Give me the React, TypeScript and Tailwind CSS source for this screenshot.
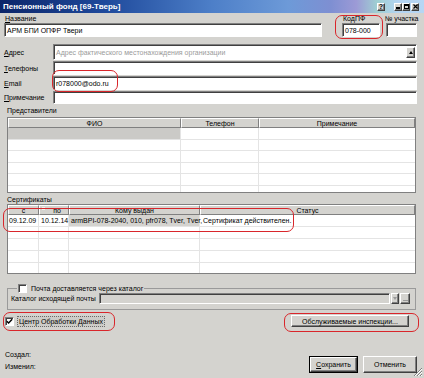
import type { ReactNode } from "react";

const raised =
  "border border-t-white border-l-white border-r-[#404040] border-b-[#404040] shadow-[inset_-1px_-1px_0_#808080] bg-[#d4d3cf]";
const sunken =
  "border border-t-[#808080] border-l-[#808080] border-r-white border-b-white shadow-[inset_1px_1px_0_#404040]";
const headCell =
  "flex h-full items-center justify-center border-r border-b border-t border-l border-t-white border-l-white border-r-[#808080] border-b-[#808080] bg-[#d4d3cf]";

function Input({ className = "", children }: { className?: string; children?: ReactNode }) {
  return (
    <div className={`flex items-center overflow-hidden whitespace-nowrap bg-white pl-[2px] ${sunken} ${className}`}>
      {children}
    </div>
  );
}

function FieldRow({ label, h, children }: { label: ReactNode; h: string; children?: ReactNode }) {
  return (
    <div className="flex items-center">
      <div className="w-[53px] pl-[4px]">{label}</div>
      <Input className={`flex-1 ${h}`}>{children}</Input>
    </div>
  );
}

function TitleButton({ children }: { children: ReactNode }) {
  return <div className={`flex h-[8px] w-[8px] items-center justify-center ${raised}`}>{children}</div>;
}

function Check({ checked = false }: { checked?: boolean }) {
  return (
    <div className={`flex h-[9px] w-[9px] items-center justify-center bg-white ${sunken}`}>
      {checked && (
        <svg width="7" height="7" viewBox="0 0 7 7">
          <path d="M0.8 3.2 L2.6 5 L6.2 1.2" stroke="#000" strokeWidth="1.4" fill="none" />
        </svg>
      )}
    </div>
  );
}

function Mark({ className }: { className: string }) {
  return <div className={`pointer-events-none absolute rounded-[7px] border-[1.5px] border-[#d9262b] ${className}`} />;
}

const repCols = ["w-[173px]", "w-[78px]", "flex-1"];

export default function App() {
  return (
    <div className="relative flex h-[378px] w-[424px] flex-col overflow-hidden bg-[#d4d3cf] font-['Liberation_Sans',Arial,sans-serif] text-[7px] leading-none text-black">
      {/* title bar */}
      <div className="flex h-[13px] items-center bg-[linear-gradient(90deg,#0b2569_0%,#1f4a9c_25%,#4d7fc8_50%,#6d9ad8_68%,#7e8fd2_78%,#9c9ad6_84%,#9fd0d2_89%,#b4d4f2_94%,#b6d6f4_100%)] pl-[3px] pr-[5px]">
        <span className="text-[8px] font-bold text-white">Пенсионный фонд [69-Тверь]</span>
        <div className="ml-auto flex items-center">
          <TitleButton>
            <span className="text-[7px] font-bold leading-none">?</span>
          </TitleButton>
          <div className="ml-[9px] flex">
            <TitleButton>
              <div className="mt-[3px] h-[1.5px] w-[4px] bg-black" />
            </TitleButton>
            <TitleButton>
              <div className="h-[5px] w-[5px] border border-t-2 border-black" />
            </TitleButton>
            <div className="ml-[1px]">
              <TitleButton>
                <svg width="5" height="5" viewBox="0 0 5 5">
                  <path d="M0.5 0.5 L4.5 4.5 M4.5 0.5 L0.5 4.5" stroke="#000" strokeWidth="1.2" />
                </svg>
              </TitleButton>
            </div>
          </div>
        </div>
      </div>

      {/* name / code / district */}
      <div className="mt-[1px] flex px-[4px]">
        <div className="w-[318px]">
          <div className="h-[9px] pl-[1px] leading-[9px]">
            <u>Н</u>азвание
          </div>
          <Input className="h-[14px]">АРМ БПИ ОПФР Твери</Input>
        </div>
        <div className="ml-[20px] w-[38px]">
          <div className="h-[9px] pl-[1px] leading-[9px]">КодПФ</div>
          <Input className="h-[14px]">078-000</Input>
        </div>
        <div className="ml-[6px] w-[31px]">
          <div className="-ml-[1px] h-[9px] whitespace-nowrap tracking-[-0.1px] leading-[9px]">№ участка</div>
          <Input className="h-[14px]" />
        </div>
      </div>

      {/* contact fields */}
      <div className="mt-[7px] flex flex-col gap-[1px] pr-[7px]">
        <FieldRow
          h="h-[16px]"
          label={
            <>
              <u>А</u>дрес
            </>
          }
        >
          <span className="flex-1 text-[#9a9a9a]">Адрес фактического местонахождения организации</span>
          <div className={`mr-[1px] flex h-[11px] w-[9px] items-center justify-center ${raised}`}>
            <div className="h-0 w-0 border-x-[2.5px] border-b-[3px] border-x-transparent border-b-black" />
          </div>
        </FieldRow>
        <FieldRow
          h="h-[14px]"
          label={
            <>
              <u>Т</u>елефоны
            </>
          }
        />
        <FieldRow
          h="h-[14px]"
          label={
            <>
              <u>E</u>mail
            </>
          }
        >
          r078000@odo.ru
        </FieldRow>
        <FieldRow
          h="h-[13px]"
          label={
            <>
              <u>П</u>римечание
            </>
          }
        />
      </div>

      {/* representatives */}
      <div className="mt-[2px] h-[10px] pl-[7px] leading-[10px]">Представители</div>
      <div className="ml-[7px] mt-[1px] flex h-[76px] w-[409px] flex-col overflow-hidden border border-[#808080] bg-white">
        <div className="flex h-[10px] shrink-0">
          <div className={`${headCell} ${repCols[0]}`}>ФИО</div>
          <div className={`${headCell} ${repCols[1]}`}>Телефон</div>
          <div className={`${headCell} ${repCols[2]}`}>Примечание</div>
        </div>
        {[0, 1, 2, 3, 4, 5].map((r) => (
          <div key={r} className="flex h-[11.5px] shrink-0 border-b border-[#e4e4e4]">
            <div className={`${repCols[0]} border-r border-[#e4e4e4] ${r === 0 ? "bg-[#cbcac7]" : ""}`} />
            <div className={`${repCols[1]} border-r border-[#e4e4e4]`} />
            <div className={repCols[2]} />
          </div>
        ))}
      </div>

      {/* certificates */}
      <div className="mt-[2px] h-[9px] pl-[7px] leading-[9px]">Сертификаты</div>
      <div className="ml-[7px] flex h-[70px] w-[409px] flex-col overflow-hidden border border-[#808080] bg-white">
        <div className="flex h-[10px] shrink-0">
          <div className={`${headCell} w-[31px]`}>с</div>
          <div className={`${headCell} relative w-[30px]`}>
            <div className="absolute left-[2px] top-[1px] h-[3px] w-[3px] bg-[#f0f0f0]" />
            <span className="ml-[6px]">по</span>
          </div>
          <div className={`${headCell} w-[131px]`}>Кому выдан</div>
          <div className={`${headCell} flex-1`}>Статус</div>
        </div>
        {[0, 1, 2, 3, 4].map((r) => (
          <div key={r} className="flex h-[12px] shrink-0 border-b border-[#e4e4e4]">
            <div className="flex w-[31px] items-center border-r border-[#e4e4e4] pl-[1px]">{r === 0 && "09.12.09"}</div>
            <div className="flex w-[30px] items-center border-r border-[#e4e4e4] pl-[2px]">{r === 0 && "10.12.14"}</div>
            <div
              className={`flex w-[131px] items-center whitespace-nowrap border-r border-[#e4e4e4] pl-[2px] ${r === 0 ? "bg-[#d4d3cf]" : ""}`}
            >
              {r === 0 && "armBPI-078-2040, 010, pfr078, Tver, Tver,"}
            </div>
            <div className="flex flex-1 items-center pl-[3px]">{r === 0 && "Сертификат действителен."}</div>
          </div>
        ))}
      </div>

      {/* mail catalog group */}
      <fieldset className="ml-[7px] mt-[9px] w-[409px] border border-[#9a9a9a] pb-[5px]">
        <legend className="ml-[9px] flex h-[10px] items-center gap-[4px] px-[1px]">
          <Check />
          <span>Почта доставляется через каталог</span>
        </legend>
        <div className="flex h-[11px] items-center pl-[3px]">
          <span className="w-[88px] whitespace-nowrap">Каталог исходящей почты</span>
          <div className={`h-full w-[291px] bg-[#d4d3cf] ${sunken}`} />
          <div className={`ml-[1px] flex h-full w-[8px] items-center justify-center ${raised}`}>
            <div className="h-0 w-0 border-x-[2px] border-t-[3px] border-x-transparent border-t-[#9a9a9a]" />
          </div>
          <div className={`ml-[1px] flex h-full w-[10px] items-end justify-center pb-[2px] ${raised}`}>
            <div className="h-[1px] w-[5px] bg-[#9a9a9a]" />
          </div>
        </div>
      </fieldset>

      {/* data center + inspections */}
      <div className="mt-[4px] flex h-[14px] items-center justify-between pl-[5px] pr-[15px]">
        <div className="flex items-center">
          <Check checked />
          <span className="ml-[3px] border border-dotted border-[#6a6a6a] bg-[#cdccc8] px-[1px] py-[1px]">
            Центр Обработки Данных
          </span>
        </div>
        <div className={`flex h-[12px] w-[118px] items-center justify-center ${raised}`}>Обслуживаемые инспекции...</div>
      </div>

      {/* footer */}
      <div className="mt-auto flex items-end justify-between pb-[5px] pl-[5px] pr-[7px]">
        <div className="flex flex-col">
          <div className="h-[12px] leading-[12px]">Создал:</div>
          <div className="h-[12px] leading-[12px]">Изменил:</div>
        </div>
        <div className="flex gap-[5px]">
          <div className="border border-black">
            <div className={`flex h-[15px] w-[47px] items-center justify-center ${raised}`}>
              <span>
                <u>С</u>охранить
              </span>
            </div>
          </div>
          <div className={`flex h-[17px] w-[54px] items-center justify-center ${raised}`}>Отменить</div>
        </div>
      </div>

      {/* resize grip */}
      <svg className="absolute bottom-[1px] right-[1px]" width="10" height="10" viewBox="0 0 10 10">
        <path d="M9 1 L1 9 M9 4 L4 9 M9 7 L7 9" stroke="#808080" strokeWidth="1" />
        <path d="M9 2 L2 9 M9 5 L5 9 M9 8 L8 9" stroke="#ffffff" strokeWidth="1" />
      </svg>

      {/* red annotation marks */}
      <Mark className="left-[335px] top-[15px] h-[24px] w-[48px]" />
      <Mark className="left-[52px] top-[70px] h-[22px] w-[66px]" />
      <Mark className="left-[3px] top-[208px] h-[24px] w-[291px]" />
      <Mark className="left-[3px] top-[312px] h-[19px] w-[112px]" />
      <Mark className="left-[284px] top-[313px] h-[19px] w-[135px]" />
    </div>
  );
}
